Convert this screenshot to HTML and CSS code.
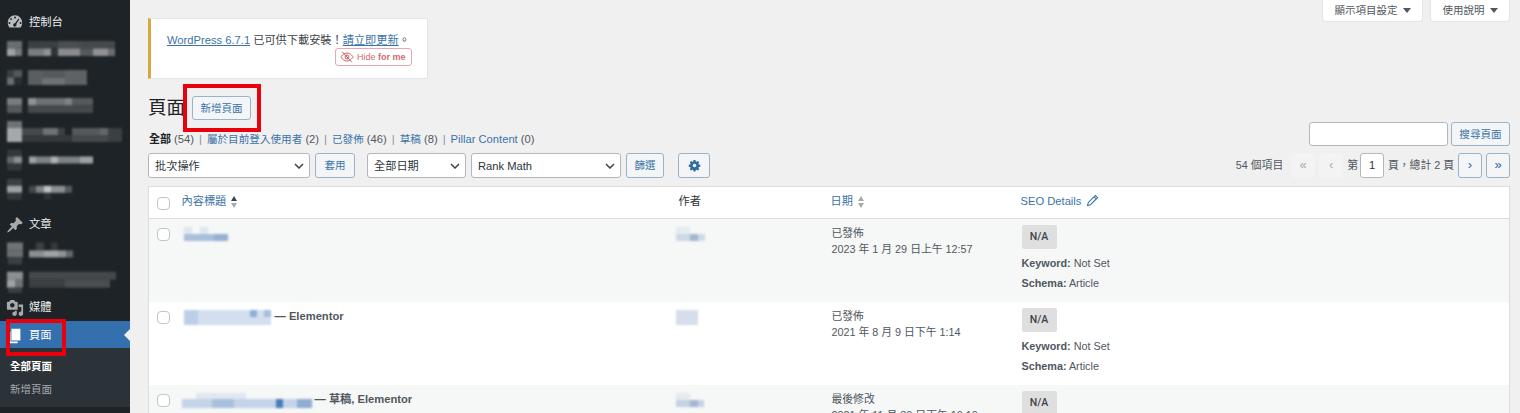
FILE: index.html
```html
<!DOCTYPE html>
<html lang="zh-Hant">
<head>
<meta charset="utf-8">
<title>頁面</title>
<link rel="stylesheet" href="styles.css">
</head>
<body>
<div class="admin">
  <nav class="side">
    <a class="mi"><svg class="ic dash" viewBox="0 0 20 20"><path fill-rule="evenodd" d="M3.760 16h12.480C17.340 14.570 18 12.790 18 10.860 18 6.240 14.420 2.500 10 2.500S2 6.240 2 10.860c0 1.930.660 3.710 1.760 5.140zM10 3.900a1.100 1.100 0 110 2.200 1.100 1.100 0 010-2.200zM5.700 5.700a1.100 1.100 0 110 2.200 1.100 1.100 0 010-2.200zM3.800 10a1.100 1.100 0 110 2.200 1.100 1.100 0 010-2.200zM16.200 10a1.100 1.100 0 110 2.200 1.100 1.100 0 010-2.200zM13.900 6.200l.9.700-3.300 5.400a1.900 1.900 0 11-1.500-1z"/></svg><span>控制台</span></a>
    <a class="mi"><svg class="mz" viewBox="0 0 130 28"><rect x="7" y="5" width="15" height="7.500" fill="#6a6e70"/><rect x="7" y="12.500" width="8" height="7.500" fill="#a0a3a5"/><rect x="15" y="12.500" width="7" height="7.500" fill="#777a7c"/><rect x="28" y="5" width="87" height="7.500" fill="#3b4043"/><rect x="58" y="5" width="22" height="7.500" fill="#4a4e51"/><rect x="80" y="5" width="35" height="7.500" fill="#45494c"/><rect x="28" y="12.500" width="16" height="7.500" fill="#7a7d7f"/><rect x="44" y="12.500" width="7" height="7.500" fill="#8f9192"/><rect x="51" y="12.500" width="7" height="7.500" fill="#2e3337"/><rect x="58" y="12.500" width="22" height="7.500" fill="#8a8c8e"/><rect x="80" y="12.500" width="13" height="7.500" fill="#55595c"/><rect x="93" y="12.500" width="15" height="7.500" fill="#8f9192"/><rect x="108" y="12.500" width="7" height="7.500" fill="#6a6d70"/></svg></a>
    <a class="mi"><svg class="mz" viewBox="0 0 130 28"><rect x="7" y="7" width="7" height="7.500" fill="#3b4043"/><rect x="14" y="7" width="8" height="7.500" fill="#55595c"/><rect x="7" y="14.500" width="7" height="7.500" fill="#6a6d70"/><rect x="14" y="14.500" width="8" height="7.500" fill="#2a2f33"/><rect x="28" y="7" width="14" height="15" fill="#5a5e60"/><rect x="42" y="7" width="23" height="7.500" fill="#55595c"/><rect x="42" y="14.500" width="23" height="7.500" fill="#6f7274"/><rect x="65" y="7" width="22" height="15" fill="#5e6265"/></svg></a>
    <a class="mi"><svg class="mz" viewBox="0 0 130 28"><rect x="7" y="7" width="15" height="7.500" fill="#7a7d7f"/><rect x="7" y="14.500" width="15" height="7.500" fill="#55595c"/><rect x="28" y="7" width="8" height="7.500" fill="#909295"/><rect x="36" y="7" width="29" height="7.500" fill="#6f7274"/><rect x="65" y="7" width="7" height="7.500" fill="#808385"/><rect x="72" y="7" width="21" height="7.500" fill="#55595c"/><rect x="28" y="14.500" width="65" height="7.500" fill="#45494c"/></svg></a>
    <a class="mi"><svg class="mz" viewBox="0 0 130 28"><rect x="7" y="2" width="15" height="7" fill="#707375"/><rect x="7" y="9" width="15" height="14" fill="#a5a8aa"/><rect x="22" y="9" width="21" height="7" fill="#45494c"/><rect x="43" y="9" width="15" height="7" fill="#6f7274"/><rect x="58" y="9" width="7" height="7" fill="#3b4043"/><rect x="72" y="9" width="28" height="7" fill="#55595c"/><rect x="100" y="9" width="8" height="7" fill="#63676a"/><rect x="108" y="9" width="14" height="14" fill="#3b4043"/><rect x="22" y="16" width="50" height="7" fill="#33383b"/><rect x="72" y="16" width="36" height="7" fill="#45494c"/></svg></a>
    <a class="mi"><svg class="mz" viewBox="0 0 130 28"><rect x="7" y="3.500" width="15" height="7" fill="#33383b"/><rect x="7" y="10.500" width="7" height="7" fill="#63676a"/><rect x="14" y="10.500" width="8" height="7" fill="#8c8f91"/><rect x="7" y="17.500" width="15" height="7" fill="#33383b"/><rect x="29" y="10.500" width="7" height="7" fill="#a0a3a5"/><rect x="36" y="10.500" width="15" height="7" fill="#808385"/><rect x="51" y="10.500" width="7" height="7" fill="#b0b2b4"/><rect x="58" y="10.500" width="22" height="7" fill="#808385"/><rect x="80" y="10.500" width="13" height="7" fill="#a0a3a5"/></svg></a>
    <a class="mi"><svg class="mz" viewBox="0 0 130 28"><rect x="7" y="4.800" width="15" height="7" fill="#3b4043"/><rect x="7" y="11.800" width="15" height="7" fill="#a0a3a5"/><rect x="7" y="18.800" width="15" height="7" fill="#33383b"/><rect x="29" y="11.800" width="7" height="7" fill="#45494c"/><rect x="36" y="11.800" width="8" height="7" fill="#808385"/><rect x="44" y="11.800" width="7" height="7" fill="#c0c2c4"/><rect x="51" y="11.800" width="14" height="7" fill="#8c8f91"/><rect x="65" y="11.800" width="7" height="7" fill="#55595c"/><rect x="44" y="18.800" width="7" height="7" fill="#2e3337"/></svg></a>
    <a class="mi gap"><svg class="ic" viewBox="0 0 20 20"><path d="M10.440 3.020l1.820-1.820 6.360 6.350-1.830 1.820c-1.050-.680-2.480-.570-3.410.360l-.750.750c-.920.930-1.040 2.350-.350 3.410l-1.830 1.820-2.410-2.410-2.800 2.790c-.420.420-3.380 2.710-3.800 2.290s1.860-3.390 2.280-3.810l2.790-2.790L4.100 9.360l1.830-1.820c1.050.690 2.480.570 3.400-.360l.750-.750c.930-.920 1.050-2.350.360-3.410z"/></svg><span>文章</span></a>
    <a class="mi"><svg class="mz" viewBox="0 0 130 28"><rect x="7" y="5.400" width="16" height="8" fill="#707375"/><rect x="7" y="13.400" width="16" height="7" fill="#6a6d70"/><rect x="8" y="20.400" width="14" height="7" fill="#3b4043"/><rect x="36" y="5.400" width="8" height="8" fill="#3b4043"/><rect x="51" y="5.400" width="7" height="8" fill="#33383b"/><rect x="29" y="13.400" width="15" height="7" fill="#8c8f91"/><rect x="44" y="13.400" width="14" height="7" fill="#a0a3a5"/><rect x="58" y="13.400" width="8" height="7" fill="#90929a"/><rect x="66" y="13.400" width="7" height="7" fill="#63676a"/></svg></a>
    <a class="mi"><svg class="mz" viewBox="0 0 130 28"><rect x="7" y="6.700" width="16" height="8" fill="#8c8f91"/><rect x="7" y="14.700" width="8" height="8" fill="#a0a3a5"/><rect x="15" y="14.700" width="8" height="8" fill="#707375"/><rect x="8" y="22.700" width="14" height="6" fill="#3b4043"/><rect x="29" y="6.700" width="87" height="8" fill="#45494c"/><rect x="29" y="14.700" width="36" height="8" fill="#3b4043"/><rect x="65" y="14.700" width="45" height="8" fill="#4a4e51"/></svg></a>
    <a class="mi"><svg class="ic" viewBox="0 0 20 20"><path d="M13 11V4c0-.550-.450-1-1-1h-1.670L9 1H5L3.670 3H2c-.550 0-1 .450-1 1v7c0 .550.450 1 1 1h10c.550 0 1-.450 1-1zM7 4.500c1.380 0 2.500 1.120 2.500 2.500S8.380 9.500 7 9.500 4.500 8.380 4.500 7 5.620 4.500 7 4.500zM14 6h5v10.500c0 1.380-1.120 2.500-2.500 2.500S14 17.880 14 16.500s1.120-2.500 2.500-2.500c.170 0 .340.020.500.050V9h-3V6zm-4 8.050V13h2v3.500c0 1.380-1.120 2.500-2.500 2.500S7 17.880 7 16.500 8.120 14 9.500 14c.170 0 .340.020.500.050z"/></svg><span>媒體</span></a>
    <a class="mi cur"><svg class="ic" viewBox="0 0 20 20"><path d="M6 15V2h10v13H6zm-1 1h8v2H3V5h2v11z"/></svg><span>頁面</span></a>
    <div class="sub">
      <a class="now">全部頁面</a>
      <a>新增頁面</a>
    </div>
    <i class="mark mark-side"></i>
  </nav>

  <main class="main">
    <div class="top">
      <div class="notice">
        <p><a class="u">WordPress 6.7.1</a> 已可供下載安裝！<a class="u">請立即更新</a>。</p>
        <span class="hide"><svg viewBox="0 0 16 16"><path d="M1 8s2.600-4.500 7-4.500S15 8 15 8s-2.600 4.500-7 4.500S1 8 1 8z"/><circle cx="8" cy="8" r="2.200"/><path d="M2.500 2l11 12"/></svg><span>Hide <b>for me</b></span></span>
      </div>
      <div class="meta">
        <span class="tab">顯示項目設定<i></i></span>
        <span class="tab">使用說明<i></i></span>
      </div>
    </div>

    <div class="head">
      <h1>頁面</h1>
      <a class="btn add">新增頁面</a>
      <i class="mark mark-add"></i>
    </div>

    <div class="views">
      <ul>
        <li><b>全部</b> <em>(54)</em></li>
        <li><a>屬於目前登入使用者</a> <em>(2)</em></li>
        <li><a>已發佈</a> <em>(46)</em></li>
        <li><a>草稿</a> <em>(8)</em></li>
        <li><a class="latin">Pillar Content</a> <em>(0)</em></li>
      </ul>
      <div class="search"><input type="text" aria-label="搜尋頁面"><a class="btn">搜尋頁面</a></div>
    </div>

    <div class="nav">
      <select class="s1"><option>批次操作</option></select>
      <a class="btn apply">套用</a>
      <select class="s2"><option>全部日期</option></select>
      <select class="s3"><option>Rank Math</option></select>
      <a class="btn filter">篩選</a>
      <a class="btn gear"><svg viewBox="0 0 20 20"><path d="M8.500 1.500h3l.4 2.300 1.400.6 1.900-1.300 2.100 2.100-1.300 1.900.6 1.400 2.300.4v3l-2.300.4-.6 1.400 1.300 1.900-2.100 2.100-1.900-1.300-1.400.6-.4 2.300h-3l-.4-2.300-1.400-.6-1.900 1.300-2.100-2.100 1.300-1.900-.6-1.400-2.300-.4v-3l2.300-.4.6-1.400-1.300-1.900 2.100-2.100 1.900 1.300 1.400-.6zM10 7.200a2.800 2.800 0 100 5.600 2.800 2.800 0 000-5.600z" fill-rule="evenodd"/></svg></a>
      <div class="pager">
        <span class="count">54 個項目</span>
        <span class="pg off">«</span>
        <span class="pg off">‹</span>
        <span>第</span>
        <span class="pg cur-pg">1</span>
        <span>頁，總計 2 頁</span>
        <a class="pg on">›</a>
        <a class="pg on">»</a>
      </div>
    </div>

    <table class="list">
      <colgroup><col class="c0"><col class="c1"><col class="c2"><col class="c3"><col></colgroup>
      <thead>
        <tr>
          <th><span class="cb"></span></th>
          <th><a>內容標題</a><span class="sort dark"></span></th>
          <th>作者</th>
          <th><a>日期</a><span class="sort"></span></th>
          <th><a>SEO Details</a><svg class="pen" viewBox="0 0 16 16"><path d="M11.500 1.800l2.700 2.700-8.700 8.700-3.600.9.900-3.600zM10 3.500l2.500 2.500"/></svg></th>
        </tr>
      </thead>
      <tbody>
        <tr class="alt">
          <td><span class="cb"></span></td>
          <td class="t"><svg class="blob b1" viewBox="0 0 44 15"><rect y="7" width="44" height="7" fill="#a9bfdb"/><rect x="0" y="0" width="8" height="7" fill="#dfe7ee"/><rect x="16" y="0" width="8" height="7" fill="#dfe7ee"/><rect x="30" y="7" width="14" height="7" fill="#94b1d4"/></svg></td>
          <td class="t"><svg class="blob b2" viewBox="0 0 30 15"><rect y="7" width="29" height="7" fill="#ced9e6"/><rect x="14" y="7" width="8" height="7" fill="#a3b7d0"/><rect x="0" y="0" width="14" height="7" fill="#e6ebf0"/></svg></td>
          <td class="d"><p>已發佈</p><p>2023 年 1 月 29 日上午 12:57</p></td>
          <td class="seo"><span class="na">N/A</span><p><b>Keyword:</b> Not Set</p><p><b>Schema:</b> Article</p></td>
        </tr>
        <tr>
          <td><span class="cb"></span></td>
          <td class="t"><svg class="blob b3" viewBox="0 0 88 15"><rect width="87" height="15" fill="#d3dfee"/><rect x="66" y="0" width="7" height="7" fill="#8fafd5"/><rect x="80" y="0" width="7" height="7" fill="#a4bedd"/><rect x="0" y="0" width="14" height="15" fill="#bccfe6"/></svg><strong> — Elementor</strong></td>
          <td class="t"><svg class="blob b2" viewBox="0 0 30 15"><rect width="22" height="15" fill="#d6deea"/></svg></td>
          <td class="d"><p>已發佈</p><p>2021 年 8 月 9 日下午 1:14</p></td>
          <td class="seo"><span class="na">N/A</span><p><b>Keyword:</b> Not Set</p><p><b>Schema:</b> Article</p></td>
        </tr>
        <tr class="alt">
          <td><span class="cb"></span></td>
          <td class="t"><svg class="blob b4" viewBox="0 0 130 15"><rect y="6" width="130" height="9" fill="#c4d4e8"/><rect x="14" y="0" width="50" height="6" fill="#e0e7f0"/><rect x="30" y="6" width="22" height="9" fill="#a9c0dc"/><rect x="94" y="6" width="7" height="9" fill="#4a7cb8"/><rect x="115" y="6" width="15" height="9" fill="#8fadd2"/></svg><strong> — 草稿, Elementor</strong></td>
          <td class="t"><svg class="blob b2" viewBox="0 0 30 15"><rect y="7" width="28" height="7" fill="#c4d2e3"/><rect x="14" y="7" width="8" height="7" fill="#a3b7d0"/><rect x="0" y="0" width="14" height="7" fill="#e6ebf0"/></svg></td>
          <td class="d"><p>最後修改</p><p>2021 年 11 月 30 日下午 10:10</p></td>
          <td class="seo"><span class="na">N/A</span></td>
        </tr>
      </tbody>
    </table>
  </main>
</div>
</body>
</html>
```
FILE: styles.css
```css
* { box-sizing: border-box; }
html, body { margin: 0; height: 413px; overflow: hidden; }
body {
  background: #f0f0f1;
  color: #3c434a;
  font: 11.2px/1.4 "Liberation Sans", "Noto Sans CJK TC", sans-serif;
}
a { color: #3b73a8; }
p { margin: 0; }
.admin { display: flex; height: 413px; }

/* sidebar */
.side { position: relative; width: 130px; flex: none; background: #1d2327; padding-top: 8px; color: #eceeef; }
.mi { display: flex; align-items: center; height: 27.7px; padding-left: 6px; gap: 5px; color: #eceeef; font-size: 11.3px; position: relative; }
.mi span, .mi .ic { margin-top: 3px; }
.mi .ic { width: 18px; height: 18px; fill: #a7aaad; flex: none; }
.mi .dash { fill: #b9bbbd; margin-top: 0; }
.gap { margin-top: 8px; }
.mz { display: block; width: 130px; height: 28px; margin-left: -6px; filter: blur(.9px); flex: none; }
.cur { background: #3570ae; color: #fff; }
.cur .ic { fill: #fff; }
.cur::after { content: ""; position: absolute; right: 0; top: 8px; border: 6px solid transparent; border-right-color: #f0f0f1; border-left: 0; }
.sub { background: #2c3338; height: 59px; padding-top: 10px; display: flex; flex-direction: column; gap: 6px; font-size: 10.5px; }
.sub a { padding-left: 10px; color: #a7aaad; line-height: 17px; }
.sub .now { color: #fff; font-weight: 700; }
.mark { position: absolute; border: 4px solid #e8000c; pointer-events: none; }
.mark-side { left: 6px; top: 319px; width: 60px; height: 37px; }

/* main */
.main { flex: 1; padding: 0 10px 0 18px; min-width: 0; }
.top { display: flex; justify-content: space-between; align-items: flex-start; height: 79px; }
.notice { width: 280px; height: 61px; margin-top: 18px; background: #fff; border: 1px solid #e3e4e6; border-left: 3px solid #d5a93c; padding: 13px 15px 0 16px; font-size: 11.2px; display: flex; flex-direction: column; }
.notice p { line-height: 16px; white-space: nowrap; }
.u { text-decoration: underline; }
.hide { align-self: flex-end; height: 18px; width: 77px; border: 1px solid #e3a9ad; border-radius: 3px; color: #cf6b72; font-size: 9px; display: flex; align-items: center; gap: 3px; padding-left: 4px; white-space: pre; }
.hide svg { width: 14px; height: 14px; fill: none; stroke: #c8525b; stroke-width: 1.100; flex: none; }
.meta { display: flex; gap: 7px; }
.tab { height: 22px; background: #fff; border: 1px solid #e3e4e6; border-top: 0; border-radius: 0 0 4px 4px; display: flex; align-items: center; justify-content: center; gap: 5px; font-size: 10.5px; color: #50575e; }
.tab:first-child { width: 101px; }
.tab:last-child { width: 80px; }
.tab i { border: 4px solid transparent; border-top: 5px solid #50575e; border-bottom: 0; }

.head { display: flex; align-items: center; gap: 7px; height: 43px; padding-top: 14px; position: relative; }
h1 { margin: 0; font-size: 18.5px; font-weight: 400; color: #1d2327; line-height: 24px; }
.btn { display: inline-flex; align-items: center; justify-content: center; height: 24px; border: 1px solid #9ab3ca; border-radius: 3px; background: #f3f5f7; color: #3b73a8; font-size: 10.5px; white-space: nowrap; }
.add { width: 59px; margin-top: 1px; }
.mark-add { left: 35px; top: 5px; width: 78px; height: 48px; }

.views { display: flex; justify-content: space-between; align-items: flex-start; height: 31px; }
.views ul { list-style: none; margin: 10px 0 0 1px; padding: 0; display: flex; font-size: 11.2px; line-height: 14px; }
.views li { white-space: pre; }
.views li + li::before { content: "|"; color: #8c8f94; margin: 0 5px; }
.views a { font-size: 10.6px; }
.views .latin { font-size: 11.2px; }
.views b { color: #1d2327; font-size: 11px; }
.views em { font-style: normal; color: #50575e; }
.search { display: flex; gap: 3px; }
.search input { width: 139px; height: 24px; border: 1px solid #b4b6b9; border-radius: 3px; background: #fff; padding: 0; }
.search .btn { width: 59px; }

.nav { display: flex; align-items: center; gap: 5px; height: 25px; }
select { appearance: none; height: 25px; border: 1px solid #b4b6b9; border-radius: 3px; padding: 0 20px 0 6px; color: #2c3338; font: 11.2px "Liberation Sans", "Noto Sans CJK TC", sans-serif; background: #fff url("data:image/svg+xml,%3Csvg xmlns='http://www.w3.org/2000/svg' width='10' height='6'%3E%3Cpath d='M1 1l4 4 4-4' fill='none' stroke='%233c434a' stroke-width='1.500'/%3E%3C/svg%3E") no-repeat right 5px center; }
.s1 { width: 162px; }
.s2 { width: 99px; margin-left: 7px; }
.s3 { width: 150px; }
.apply { width: 40px; height: 25px; }
.filter { width: 38px; height: 25px; }
.gear { width: 32px; height: 25px; margin-left: 9px; }
.gear svg { width: 13px; height: 13px; fill: #2f6ba3; }
.pager { margin-left: auto; display: flex; align-items: center; gap: 4px; font-size: 10.8px; color: #50575e; }
.count { margin-right: 4px; }
.pg { width: 24px; height: 25px; border-radius: 3px; display: inline-flex; align-items: center; justify-content: center; font-size: 13px; }
.off { background: #f3f3f4; border: 1px solid #f3f3f4; color: #a7aaad; }
.cur-pg { background: #fff; border: 1px solid #b4b6b9; font-size: 11.2px; color: #2c3338; margin-left: -2px; }
.on { background: #f3f5f7; border: 1px solid #9ab3ca; color: #2f6ba3; }

/* table */
.list { width: 100%; table-layout: fixed; border-collapse: collapse; margin-top: 8px; background: #fff; border: 1px solid #dcdcde; }
.c0 { width: 23px; }
.c1 { width: 497px; }
.c2 { width: 152px; }
.c3 { width: 190px; }
th { height: 32px; font-weight: 400; text-align: left; padding: 0 0 2px 10px; font-size: 11.2px; border-bottom: 1px solid #dcdcde; color: #2c3338; }
th:first-child, td:first-child { padding-left: 8px; }
td { height: 83px; vertical-align: top; padding: 6px 0 0 10px; font-size: 10.8px; line-height: 20px; color: #50575e; }
td.t { padding-top: 4px; }
td.d, td.seo { padding-left: 11px; }
.alt td { background: #f6f7f7; }
td strong { color: #50575e; font-size: 11.2px; }
.cb { display: block; width: 13px; height: 13px; background: #fff; border: 1px solid #c3c4c7; border-radius: 4px; margin-top: 3px; }
.sort { display: inline-flex; flex-direction: column; gap: 2px; margin-left: 5px; vertical-align: middle; }
.sort::before { content: ""; border: 3px solid transparent; border-top: 0; border-bottom: 5px solid #a7aaad; }
.sort::after { content: ""; border: 3px solid transparent; border-bottom: 0; border-top: 5px solid #a7aaad; }
.sort.dark::before { border-bottom-color: #3c434a; }
.pen { width: 13px; height: 13px; margin-left: 5px; vertical-align: -2px; fill: none; stroke: #3b73a8; stroke-width: 1.300; }
.blob { display: inline-block; height: 15px; vertical-align: top; margin-top: 4px; filter: blur(.9px); }
.b1 { width: 44px; margin-left: 2px; }
.b2 { width: 30px; margin-left: -3px; }
.b3 { width: 88px; margin-left: 2px; }
.b4 { width: 130px; }
.d p { line-height: 16px; }
.seo .na { display: block; width: 35px; height: 24px; background: #dfdfe0; border-radius: 2px; text-align: center; font: 500 10.5px/24px Roboto, sans-serif; color: #3c434a; margin-bottom: 4px; }
.seo p { line-height: 20px; }
```
